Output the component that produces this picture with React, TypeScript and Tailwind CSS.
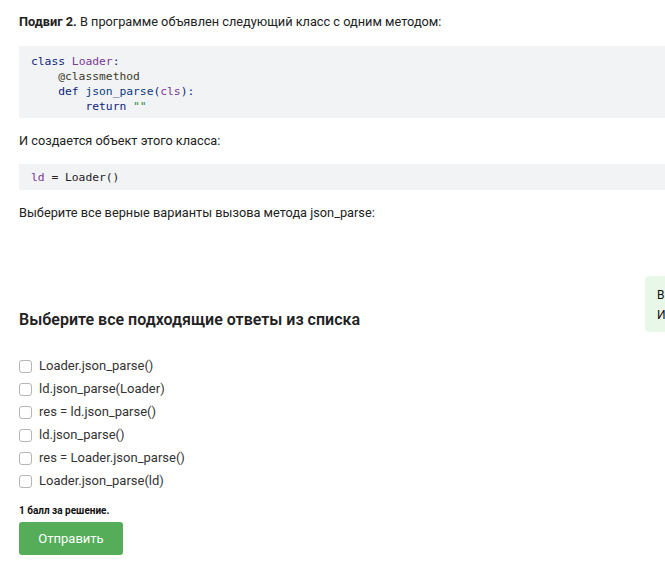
import React from "react";

const mono = { fontFamily: '"DejaVu Sans Mono", "Liberation Mono", monospace' } as const;

const options = [
  "Loader.json_parse()",
  "ld.json_parse(Loader)",
  "res = ld.json_parse()",
  "ld.json_parse()",
  "res = Loader.json_parse()",
  "Loader.json_parse(ld)",
];

export default function App() {
  return (
    <div
      className="relative w-[665px] h-[565px] overflow-hidden bg-white text-[#222]"
      style={{ fontFamily: 'Roboto, "Noto Sans", sans-serif' }}
    >
      <div className="pl-[19px] pt-[13px]">
        <p className="text-[12.75px] leading-[18px]">
          <b className="font-bold">Подвиг 2.</b> В программе объявлен следующий класс с одним методом:
        </p>
        <div className="mt-[15px] w-[700px] bg-[#f2f3f5] pl-[12px] pt-[8px] pb-[4px]">
          <pre className="text-[11.3px] leading-[15px] text-[#0b1f80]" style={mono}>
            <span className="text-[#0b1f80]">class</span> <span className="text-[#7a3a96]">Loader</span>:{"\n"}
            {"    "}<span className="text-[#3a3a2a]">@classmethod</span>{"\n"}
            {"    "}<span className="text-[#0b1f80]">def</span> <span className="text-[#0b3a80]">json_parse</span>(<span className="text-[#7a3a96]">cls</span>):{"\n"}
            {"        "}<span className="text-[#0b1f80]">return</span> <span className="text-[#2a8a3a]">""</span>
          </pre>
        </div>
        <p className="mt-[14px] text-[12.75px] leading-[18px]">И создается объект этого класса:</p>
        <div className="mt-[14px] w-[700px] bg-[#f2f3f5] pl-[12px] pt-[6px] pb-[5px]">
          <pre className="text-[11.3px] leading-[15px] text-[#222]" style={mono}>
            <span className="text-[#7a3a96]">ld</span> = Loader()
          </pre>
        </div>
        <p className="mt-[14px] text-[12.75px] leading-[18px]">Выберите все верные варианты вызова метода json_parse:</p>

        <h2 className="mt-[88px] text-[16px] leading-[20px] font-semibold text-[#222]">
          Выберите все подходящие ответы из списка
        </h2>

        <div className="mt-[27px] flex flex-col gap-[5px]">
          {options.map((o) => (
            <label key={o} className="flex items-center gap-[7px] h-[18px] text-[13px]">
              <span className="w-[13px] h-[13px] rounded-[3px] border border-[#b5b5b5] bg-white" />
              <span className="text-[#333]">{o}</span>
            </label>
          ))}
        </div>

        <p className="mt-[15px] text-[10px] leading-[12px] font-bold text-[#111]">1 балл за решение.</p>
        <button className="mt-[5px] w-[104px] h-[33px] rounded-[3px] bg-[#55ad59] text-white text-[13px]">
          Отправить
        </button>
      </div>

      <div className="absolute left-[645px] top-[276px] w-[200px] h-[56px] rounded-[4px] bg-[#e9f7e9] pl-[12px] pt-[9px] text-[12px] leading-[20px] text-[#111]">
        <div>Выбор</div>
        <div>Информация</div>
      </div>
    </div>
  );
}
